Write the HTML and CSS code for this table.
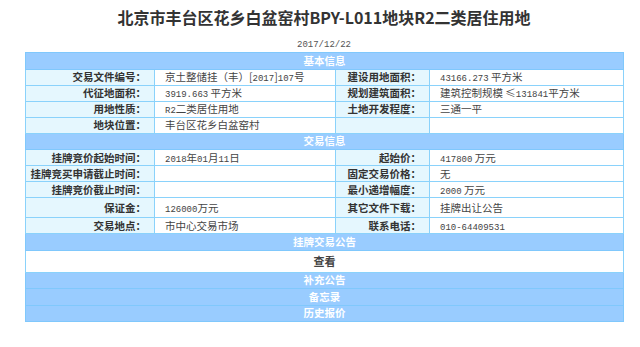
FILE: index.html
```html
<!DOCTYPE html>
<html lang="zh-CN">
<head>
<meta charset="utf-8">
<title>北京市丰台区花乡白盆窑村BPY-L011地块R2二类居住用地</title>
<link rel="stylesheet" href="styles.css">
</head>
<body>
<div class="page">
  <h1 class="title">北京市丰台区花乡白盆窑村BPY-L011地块R2二类居住用地</h1>
  <div class="date"><span class="num">2017/12/22</span></div>
  <table class="info">
    <colgroup>
      <col class="c1"><col class="c2"><col class="c3"><col class="c4">
    </colgroup>
    <tr><th colspan="4" class="sec">基本信息</th></tr>
    <tr>
      <td class="lab">交易文件编号：</td><td class="val">京土整储挂（丰）[<span class="num">2017</span>]<span class="num">107</span>号</td>
      <td class="lab">建设用地面积：</td><td class="val"><span class="num">43166.273</span> 平方米</td>
    </tr>
    <tr>
      <td class="lab">代征地面积：</td><td class="val"><span class="num">3919.663</span> 平方米</td>
      <td class="lab">规划建筑面积：</td><td class="val">建筑控制规模 ≤<span class="num">131841</span>平方米</td>
    </tr>
    <tr>
      <td class="lab">用地性质：</td><td class="val"><span class="num">R2</span>二类居住用地</td>
      <td class="lab">土地开发程度：</td><td class="val">三通一平</td>
    </tr>
    <tr>
      <td class="lab">地块位置：</td><td class="val">丰台区花乡白盆窑村</td>
      <td class="lab"></td><td class="val"></td>
    </tr>
    <tr><th colspan="4" class="sec">交易信息</th></tr>
    <tr>
      <td class="lab">挂牌竞价起始时间：</td><td class="val"><span class="num">2018</span>年<span class="num">01</span>月<span class="num">11</span>日</td>
      <td class="lab">起始价：</td><td class="val"><span class="num">417800</span> 万元</td>
    </tr>
    <tr>
      <td class="lab">挂牌竞买申请截止时间：</td><td class="val"></td>
      <td class="lab">固定交易价格：</td><td class="val">无</td>
    </tr>
    <tr>
      <td class="lab">挂牌竞价截止时间：</td><td class="val"></td>
      <td class="lab">最小递增幅度：</td><td class="val"><span class="num">2000</span> 万元</td>
    </tr>
    <tr class="tall">
      <td class="lab">保证金：</td><td class="val"><span class="num">126000</span>万元</td>
      <td class="lab">其它文件下载：</td><td class="val">挂牌出让公告</td>
    </tr>
    <tr>
      <td class="lab">交易地点：</td><td class="val">市中心交易市场</td>
      <td class="lab">联系电话：</td><td class="val"><span class="num">010-64409531</span></td>
    </tr>
    <tr><th colspan="4" class="sec">挂牌交易公告</th></tr>
    <tr class="view"><td colspan="4" class="look">查看</td></tr>
    <tr><th colspan="4" class="sec">补充公告</th></tr>
    <tr><th colspan="4" class="sec">备忘录</th></tr>
    <tr><th colspan="4" class="sec">历史报价</th></tr>
  </table>
</div>
</body>
</html>
```
FILE: styles.css
```css
html, body {
  margin: 0;
  padding: 0;
  background: #ffffff;
}
body {
  font-family: "Noto Sans CJK SC", "Noto Sans", sans-serif;
  color: #333333;
}
.page {
  width: 598px;
  margin-left: 25px;
  padding-top: 5px;
}
.title {
  margin: 0;
  font-size: 16px;
  line-height: 24px;
  font-weight: bold;
  text-align: center;
  color: #333333;
}
.date {
  margin-top: 4px;
  height: 14px;
  line-height: 14px;
  text-align: center;
  color: #555555;
}
.num {
  font-family: "Liberation Mono", monospace;
  font-size: 9px;
  line-height: 1px;
}
.info {
  margin-top: 5px;
  width: 598px;
  table-layout: fixed;
  border-collapse: collapse;
  border: 1px solid #a6e1ff;
  font-size: 10.5px;
}
.c1 { width: 129px; }
.c2 { width: 181px; }
.c3 { width: 94px; }
.c4 { width: 194px; }
.info th, .info td {
  border: 1px solid #8ad2fb;
  padding: 0;
  height: 15px;
  line-height: 14px;
  overflow: hidden;
}
.info th.sec {
  height: 15.5px;
  background: #99ccff;
  color: #ffffff;
  font-weight: bold;
  text-align: center;
  border-color: #80c8fc;
}
.lab {
  background: #e5f7fe;
  font-weight: bold;
  text-align: right;
  padding-right: 8px !important;
  color: #333333;
  white-space: nowrap;
}
.val {
  background: #ffffff;
  text-align: left;
  padding-left: 10px !important;
  color: #444444;
  white-space: nowrap;
}
.info .tall td {
  height: 19px;
}
.info .view td {
  height: 21px;
}
.look {
  background: #ffffff;
  text-align: center;
  font-weight: bold;
  font-size: 11px;
  color: #444444;
}
```
